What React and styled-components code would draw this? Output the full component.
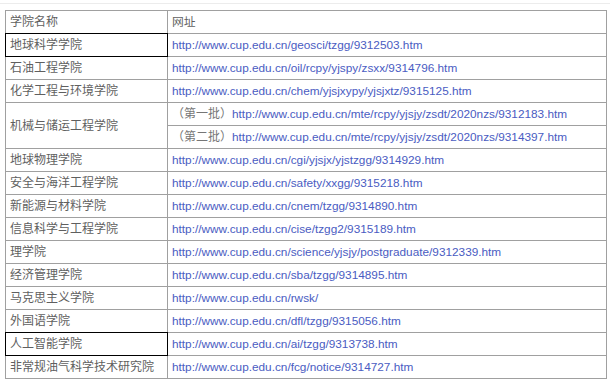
import React from "react";
import styled, { createGlobalStyle } from "styled-components";

const GlobalStyle = createGlobalStyle`
  html, body {
    margin: 0;
    padding: 0;
    background: #fff;
  }
`;

const BASE = "http://www.cup.edu.cn/";

const schools = [
  { name: "地球科学学院", links: ["geosci/tzgg/9312503.htm"], selected: true },
  { name: "石油工程学院", links: ["oil/rcpy/yjspy/zsxx/9314796.htm"] },
  { name: "化学工程与环境学院", links: ["chem/yjsjxypy/yjsjxtz/9315125.htm"] },
  {
    name: "机械与储运工程学院",
    links: [
      "mte/rcpy/yjsjy/zsdt/2020nzs/9312183.htm",
      "mte/rcpy/yjsjy/zsdt/2020nzs/9314397.htm",
    ],
    batches: ["（第一批）", "（第二批）"],
  },
  { name: "地球物理学院", links: ["cgi/yjsjx/yjstzgg/9314929.htm"] },
  { name: "安全与海洋工程学院", links: ["safety/xxgg/9315218.htm"] },
  { name: "新能源与材料学院", links: ["cnem/tzgg/9314890.htm"] },
  { name: "信息科学与工程学院", links: ["cise/tzgg2/9315189.htm"] },
  { name: "理学院", links: ["science/yjsjy/postgraduate/9312339.htm"] },
  { name: "经济管理学院", links: ["sba/tzgg/9314895.htm"] },
  { name: "马克思主义学院", links: ["rwsk/"] },
  { name: "外国语学院", links: ["dfl/tzgg/9315056.htm"] },
  { name: "人工智能学院", links: ["ai/tzgg/9313738.htm"], selected: true },
  { name: "非常规油气科学技术研究院", links: ["fcg/notice/9314727.htm"] },
];

function App() {
  return (
    <Page>
      <GlobalStyle />
      <TopRule />
      <Table>
        <colgroup>
          <col style={{ width: 162 }} />
          <col />
        </colgroup>
        <tbody>
          <tr>
            <NameCell>学院名称</NameCell>
            <LinkCell $plain>网址</LinkCell>
          </tr>
          {schools.map((s) =>
            s.links.map((link, i) => (
              <tr key={s.name + i}>
                {i === 0 && (
                  <NameCell rowSpan={s.links.length} $selected={s.selected}>
                    {s.name}
                  </NameCell>
                )}
                <LinkCell>
                  {s.batches && <Batch>{s.batches[i]}</Batch>}
                  {BASE + link}
                </LinkCell>
              </tr>
            ))
          )}
        </tbody>
      </Table>
    </Page>
  );
}

export default App;

const Page = styled.div`
  width: 612px;
  height: 386px;
  padding-top: 3px;
  box-sizing: border-box;
  font-family: "Liberation Sans", "Noto Sans CJK SC", sans-serif;
  font-size: 12px;
`;

const TopRule = styled.div`
  width: 610px;
  border-top: 1px solid #ececec;
`;

const Table = styled.table`
  margin: 6px 0 0 5px;
  width: 602px;
  border-collapse: collapse;
  table-layout: fixed;
`;

const Cell = styled.td`
  height: 23px;
  padding: 0 4px;
  box-sizing: border-box;
  border: 1px solid #a0a0a0;
  vertical-align: middle;
  white-space: nowrap;
  line-height: 14px;
`;

const NameCell = styled(Cell)`
  color: #5f5f5f;
  ${(p) => p.$selected && "border: 1px double #000;"}
`;

const LinkCell = styled(Cell)`
  color: ${(p) => (p.$plain ? "#5f5f5f" : "#4a5cc2")};
  font-size: 11.8px;
`;

const Batch = styled.span`
  color: #767676;
  font-size: 12px;
`;
